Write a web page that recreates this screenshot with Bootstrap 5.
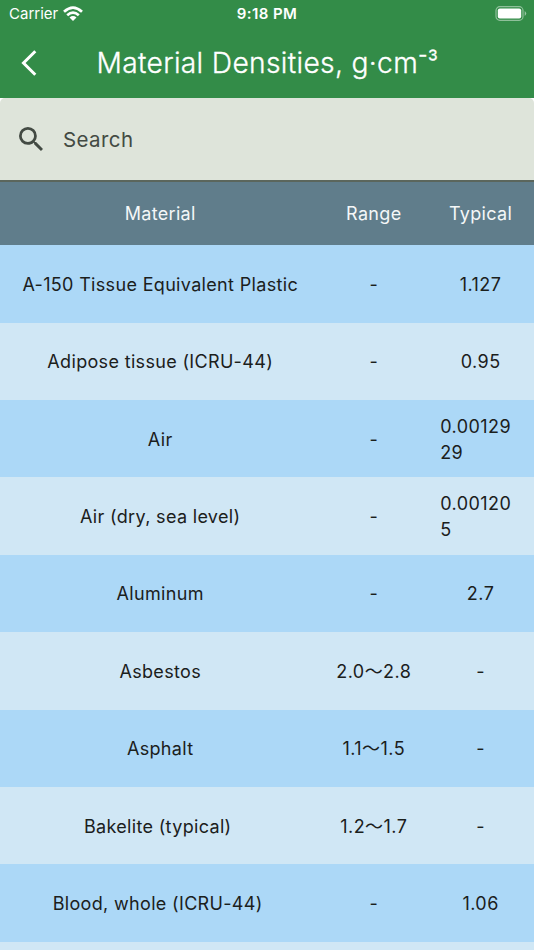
<!DOCTYPE html>
<html lang="en">
<head>
<meta charset="utf-8">
<meta name="viewport" content="width=device-width, initial-scale=1">
<title>Material Densities</title>
<link href="https://cdn.jsdelivr.net/npm/bootstrap@5.3.0/dist/css/bootstrap.min.css" rel="stylesheet">
<style>
body{font-family:Inter,"Noto Sans CJK JP",sans-serif;background:#fff;height:950px;overflow:hidden;color:#1b201c;font-size:18px}
.app-top{background:#338c48;height:98px}
.status-bar{height:27px;padding:0 7px 0 9px;display:grid;grid-template-columns:1fr auto 1fr;font-size:15px}
.status-bar span{padding-top:2px}
.status-time{font-weight:600;font-size:15px;letter-spacing:.4px;margin-right:2px}
.title-bar{height:71px}
.title-bar h1{font-size:28.2px;font-weight:300;letter-spacing:.33px;padding-top:2px;-webkit-text-stroke:.3px #fff}
.unit-power{display:inline-block;transform:scaleX(.83);transform-origin:left;margin-right:-4px;line-height:1}
.back-btn{width:57px;border:0}
.search-box{height:83.6px;background:#dee4da;border-radius:5px 5px 0 0;border-bottom:2px solid #5b665c;padding-left:19px}
.search-box input{font-size:20.5px;letter-spacing:.4px;margin:4px 0 0 20px;color:#434a43}
.search-box input::placeholder{color:#434a43;opacity:1}
.density-row{height:77.4px;flex-shrink:0;display:grid;grid-template-columns:3fr 1fr 1fr;align-items:center;text-align:center;letter-spacing:.45px;line-height:26px;background:#d0e7f5;padding-top:1.8px}
.density-row span:first-child,.density-head{letter-spacing:.33px}
.density-row:nth-child(even){background:#acd8f7}
.density-row.density-head{height:63.7px;background:#607d8b;color:#f4f7f8}
.density-row:last-child{height:auto;flex:1 1 0}
.density-row .split-value{text-align:left;padding:0 13px;word-break:break-all}
.trailing-gap{padding-right:5px}
</style>
<script src="https://cdn.jsdelivr.net/npm/bootstrap@5.3.0/dist/js/bootstrap.bundle.min.js"></script>
</head>
<body class="d-flex flex-column">
<header class="app-top text-white flex-shrink-0">
  <div class="status-bar align-items-center">
    <div class="d-flex align-items-center gap-1"><span>Carrier</span>
      <svg width="22" height="16" viewBox="0 0 22 16" fill="none" stroke="#fff" stroke-width="2.7"><path d="M2 5.8Q11-2.4 20 5.8M5.2 9.2Q11 4 16.8 9.2"/><path d="M7.5 11.4Q11 8.5 14.5 11.4L11 15Z" fill="#fff" stroke="none"/></svg>
    </div>
    <span class="status-time">9:18 PM</span>
    <svg class="ms-auto" width="32" height="15" viewBox="0 0 32 15"><rect x="1" y=".7" width="27" height="13.6" rx="3.8" fill="none" stroke="#fff" stroke-opacity=".45" stroke-width="1.2"/><rect x="2.8" y="2.6" width="23.4" height="9.8" rx="2" fill="#fff"/><path d="M29.7 5q3 2.5 0 5z" fill="#fff" fill-opacity=".5"/></svg>
  </div>
  <div class="title-bar d-flex align-items-center">
    <button class="back-btn bg-transparent p-0 d-flex justify-content-center align-items-center" aria-label="Back"><svg width="18" height="26" viewBox="0 0 18 26" fill="none" stroke="#fff" stroke-width="3"><path d="M15.3 1.2 3.5 13l11.8 11.8"/></svg></button>
    <h1 class="m-0 flex-grow-1 text-center pe-5 me-2">Material Densities, g·cm<span class="unit-power">⁻³</span></h1>
  </div>
</header>
<label class="search-box d-flex align-items-center w-100 flex-shrink-0">
  <svg width="24" height="24" viewBox="3 3 17.5 17.5" fill="#434a43"><path d="M15.5 14h-.79l-.28-.27A6.47 6.47 0 0 0 16 9.5 6.5 6.5 0 1 0 9.5 16c1.61 0 3.09-.59 4.23-1.57l.27.28v.79l5 4.99L20.49 19l-4.99-5zm-6 0a4.5 4.5 0 1 1 0-9 4.5 4.5 0 0 1 0 9z"/></svg>
  <input class="border-0 bg-transparent p-0 flex-grow-1" placeholder="Search" aria-label="Search">
</label>
<main class="d-flex flex-column flex-grow-1 overflow-hidden">
  <div class="density-row density-head"><span>Material</span><span>Range</span><span>Typical</span></div>
  <div class="density-row"><span>A-150 Tissue Equivalent Plastic</span><span>-</span><span>1.127</span></div>
  <div class="density-row"><span>Adipose tissue (ICRU-44)</span><span>-</span><span>0.95</span></div>
  <div class="density-row"><span>Air</span><span>-</span><span class="split-value">0.0012929</span></div>
  <div class="density-row"><span>Air (dry, sea level)</span><span>-</span><span class="split-value">0.001205</span></div>
  <div class="density-row"><span>Aluminum</span><span>-</span><span>2.7</span></div>
  <div class="density-row"><span>Asbestos</span><span>2.0～2.8</span><span>-</span></div>
  <div class="density-row"><span>Asphalt</span><span>1.1～1.5</span><span>-</span></div>
  <div class="density-row"><span class="trailing-gap">Bakelite (typical)</span><span>1.2～1.7</span><span>-</span></div>
  <div class="density-row"><span class="trailing-gap">Blood, whole (ICRU-44)</span><span>-</span><span>1.06</span></div>
  <div class="density-row"></div>
</main>
</body>
</html>
